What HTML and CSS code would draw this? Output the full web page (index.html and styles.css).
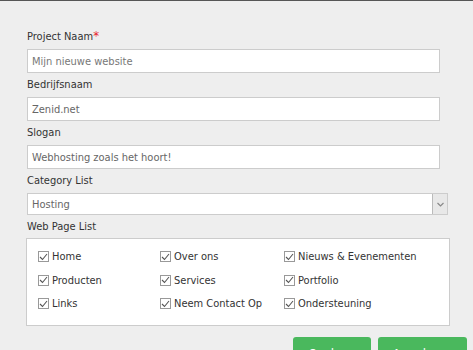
FILE: index.html
```html
<!DOCTYPE html>
<html>
<head>
	<title>Project</title>
	<meta name="viewport" content="width=device-width, initial-scale=1.0">
	<link rel="stylesheet" href="styles.css">
</head>
<body>

	<div class="form">
		<div class="field">
			<label>Project Naam<span class="req">*</span></label>
			<input type="text" placeholder="Mijn nieuwe website">
		</div>
		<div class="field">
			<label>Bedrijfsnaam</label>
			<input type="text" value="Zenid.net">
		</div>
		<div class="field">
			<label>Slogan</label>
			<input type="text" value="Webhosting zoals het hoort!">
		</div>
		<div class="field">
			<label>Category List</label>
			<div class="select">
				<select>
					<option>Hosting</option>
				</select>
				<span class="arrow">
					<svg width="7" height="5" viewBox="0 0 7 5"><path d="M0.5 1 L3.5 4 L6.5 1" fill="none" stroke="#888" stroke-width="1.2"/></svg>
				</span>
			</div>
		</div>
		<div class="field">
			<label class="list-label">Web Page List</label>
			<div class="pages">
				<label class="check"><span class="box"><svg width="9" height="8" viewBox="0 0 9 8"><path d="M1 4 L3.5 6.5 L8 1" fill="none" stroke="#555" stroke-width="1.1"/></svg></span>Home</label>
				<label class="check"><span class="box"><svg width="9" height="8" viewBox="0 0 9 8"><path d="M1 4 L3.5 6.5 L8 1" fill="none" stroke="#555" stroke-width="1.1"/></svg></span>Over ons</label>
				<label class="check"><span class="box"><svg width="9" height="8" viewBox="0 0 9 8"><path d="M1 4 L3.5 6.5 L8 1" fill="none" stroke="#555" stroke-width="1.1"/></svg></span>Nieuws &amp; Evenementen</label>
				<label class="check"><span class="box"><svg width="9" height="8" viewBox="0 0 9 8"><path d="M1 4 L3.5 6.5 L8 1" fill="none" stroke="#555" stroke-width="1.1"/></svg></span>Producten</label>
				<label class="check"><span class="box"><svg width="9" height="8" viewBox="0 0 9 8"><path d="M1 4 L3.5 6.5 L8 1" fill="none" stroke="#555" stroke-width="1.1"/></svg></span>Services</label>
				<label class="check"><span class="box"><svg width="9" height="8" viewBox="0 0 9 8"><path d="M1 4 L3.5 6.5 L8 1" fill="none" stroke="#555" stroke-width="1.1"/></svg></span>Portfolio</label>
				<label class="check"><span class="box"><svg width="9" height="8" viewBox="0 0 9 8"><path d="M1 4 L3.5 6.5 L8 1" fill="none" stroke="#555" stroke-width="1.1"/></svg></span>Links</label>
				<label class="check"><span class="box"><svg width="9" height="8" viewBox="0 0 9 8"><path d="M1 4 L3.5 6.5 L8 1" fill="none" stroke="#555" stroke-width="1.1"/></svg></span>Neem Contact Op</label>
				<label class="check"><span class="box"><svg width="9" height="8" viewBox="0 0 9 8"><path d="M1 4 L3.5 6.5 L8 1" fill="none" stroke="#555" stroke-width="1.1"/></svg></span>Ondersteuning</label>
			</div>
		</div>
	</div>

	<div class="action">
		<button>Opslaan</button>
		<button>Annuleren</button>
	</div>

</body>
</html>
```

FILE: styles.css
```css
*{
	box-sizing: border-box;
	font-family: "DejaVu Sans Condensed", "DejaVu Sans", Verdana, sans-serif;
}
html,body{
	width: 100%;
	height: 100%;
}
body{
	margin: 0px;
	background: #eeeeee;
	border-top: 1px solid #555555;
	color: #333333;
	font-size: 10.5px;
	overflow: hidden;
}

.form{
	padding: 28px 0px 0px 27px;
}

.field{
	display: flex;
	flex-direction: column;
}

.field > label{
	height: 16px;
	line-height: 16px;
	margin-bottom: 4px;
	font-size: 11px;
	color: #333333;
}

.field .req{
	color: #e8232a;
	font-size: 13px;
	vertical-align: top;
	line-height: 13px;
}

.field input{
	width: 413px;
	height: 24px;
	margin: 0px 0px 4px 0px;
	padding: 0px 4px;
	border: 1px solid #cccccc;
	background: white;
	outline: none;
	font-size: 11px;
	color: #666666;
}

.field input::placeholder{
	color: #777777;
}

.select{
	width: 421px;
	height: 22px;
	display: flex;
	border: 1px solid #cccccc;
	background: white;
	margin-bottom: 4px;
}

.select select{
	flex: 1;
	appearance: none;
	-webkit-appearance: none;
	border: none;
	outline: none;
	background: transparent;
	padding: 0px 4px;
	font-size: 11px;
	color: #666666;
}

.select .arrow{
	width: 15px;
	display: flex;
	justify-content: center;
	align-items: center;
	background: #e8e8e8;
	border-left: 1px solid #bbbbbb;
}

.field .list-label{
	margin-bottom: 3px;
}

.pages{
	width: 424px;
	margin-left: -1px;
	height: 88px;
	display: grid;
	grid-template-columns: 122px 124px 1fr;
	grid-auto-rows: 23.5px;
	padding: 6px 0px 0px 11px;
	border: 1px solid #cccccc;
	background: white;
}

.check{
	display: flex;
	align-items: center;
	font-size: 11px;
	color: #333333;
}

.check .box{
	width: 11px;
	height: 11px;
	margin-right: 3px;
	display: flex;
	justify-content: center;
	align-items: center;
	border: 1px solid #999999;
	background: white;
}

.action{
	display: flex;
	justify-content: flex-end;
	gap: 7px;
	padding: 11px 6px 0px 0px;
}

.action button{
	height: 32px;
	border: none;
	outline: none;
	border-radius: 3px;
	background: #4ab85d;
	color: white;
	font-size: 13px;
	cursor: pointer;
}

.action button:nth-child(1){
	width: 78px;
}

.action button:nth-child(2){
	width: 89px;
}
```
